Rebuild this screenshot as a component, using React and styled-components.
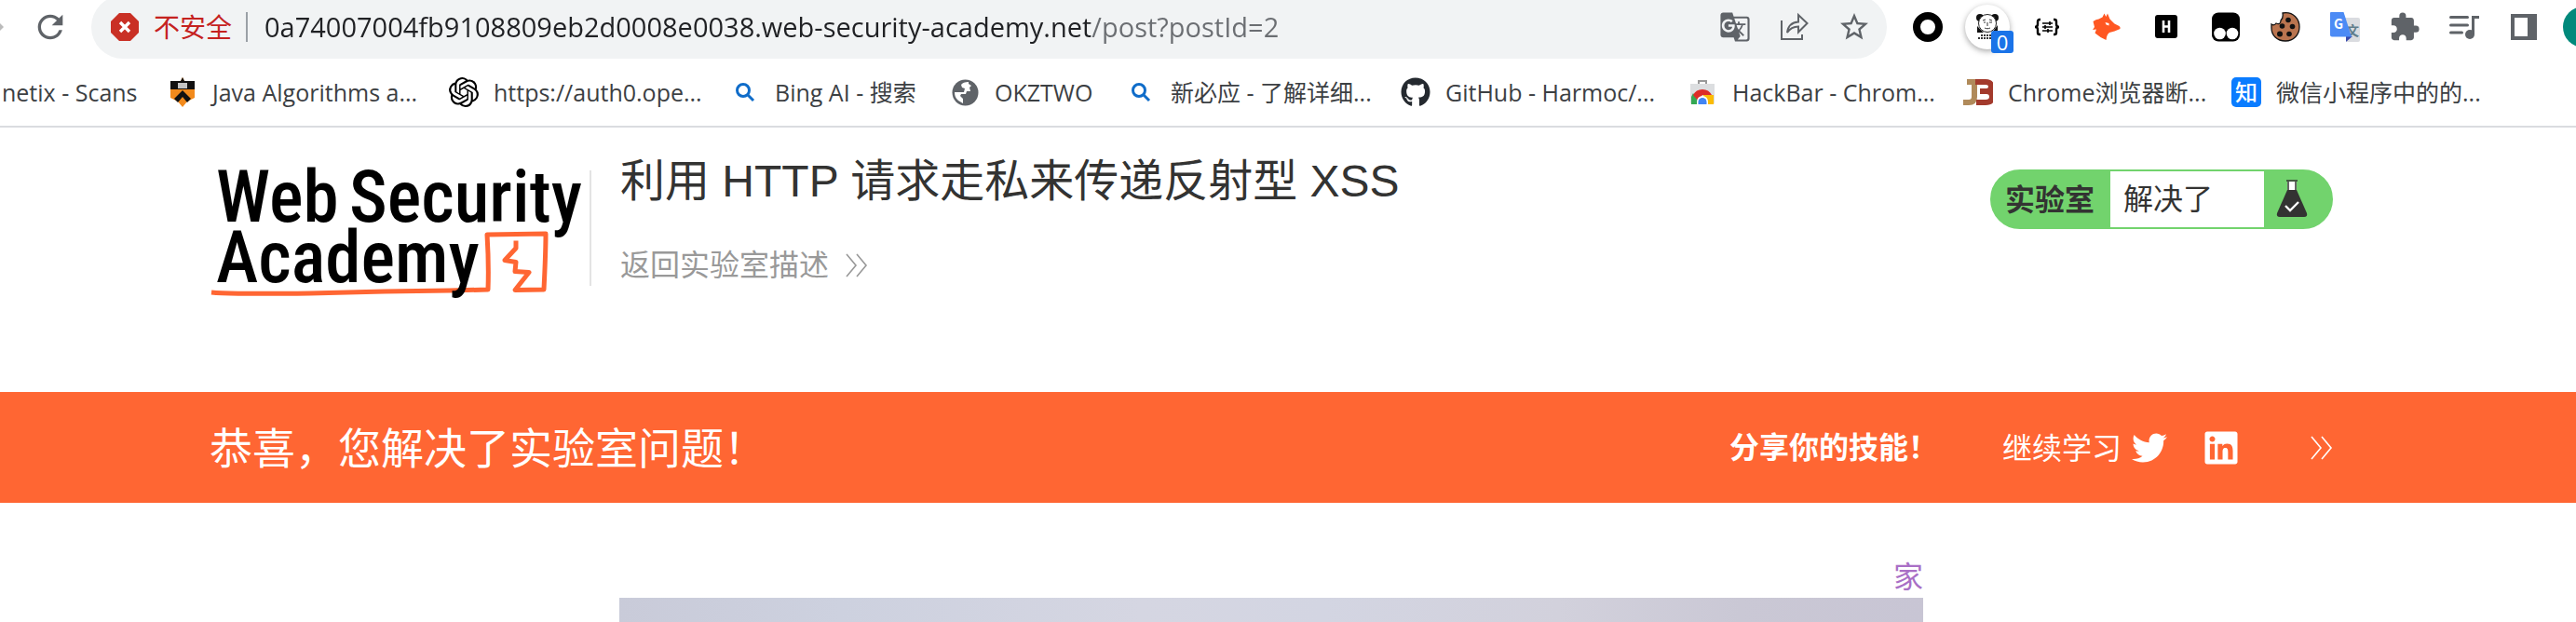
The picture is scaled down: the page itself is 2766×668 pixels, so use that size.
import React from "react";
import styled, { createGlobalStyle } from "styled-components";
import { MdRefresh, MdStarBorder, MdExtension, MdGTranslate } from "react-icons/md";
import { FaGithub, FaTwitter, FaLinkedin } from "react-icons/fa";
import { SiOpenai } from "react-icons/si";

const uiFont = `"Open Sans", "Noto Sans CJK SC", sans-serif`;
const pageFont = `"Liberation Sans", "Noto Sans CJK SC", sans-serif`;
const cjkFont = `"Noto Sans CJK SC", sans-serif`;

const GlobalStyle = createGlobalStyle`
  * { box-sizing: border-box; }
  body { margin: 0; background: #fff; overflow-x: hidden; }
  a { color: inherit; text-decoration: none; }
  button { border: 0; padding: 0; background: none; color: inherit; font: inherit; }
  svg { display: block; flex: none; }
`;

/* ---------- browser chrome ---------- */

const Toolbar = styled.div`
  display: flex;
  align-items: flex-end;
  height: 63px;
  overflow: hidden;
  font-family: ${uiFont};
  color: #5f6368;
`;

const NavButtons = styled.div`
  display: flex;
  align-items: center;
  gap: 33px;
  width: 98px;
  height: 68px;
`;

const IconButton = styled.button`
  display: flex;
  align-items: center;
  justify-content: center;
  flex: none;
  width: ${(p) => p.$width || 64}px;
  height: 68px;
`;

const AddressBar = styled.div`
  display: flex;
  align-items: center;
  flex: 1;
  min-width: 0;
  height: 68px;
  padding: 0 3px 0 21px;
  border-radius: 34px;
  background: #f1f3f4;
`;

const Insecure = styled.button`
  display: flex;
  align-items: center;
  gap: 16px;
  flex: none;
  margin-right: 15px;
  color: #c5221f;
  font-size: 28px;
  line-height: 40px;
`;

const Divider = styled.span`
  flex: none;
  width: 2px;
  height: 32px;
  margin-right: 18px;
  background: #9aa0a6;
`;

const Url = styled.input`
  flex: 1;
  min-width: 0;
  height: 48px;
  padding: 0;
  border: 0;
  outline: 0;
  color: #202124;
  font-family: ${uiFont};
  font-size: 29px;
  line-height: 48px;
  background: linear-gradient(90deg, #202124 0 887px, #6b6e72 887px);
  background-clip: text;
  -webkit-text-fill-color: transparent;
`;

const Extensions = styled.div`
  display: flex;
  flex: none;
  margin-left: 12px;
`;

const ActiveExtension = styled.span`
  position: relative;
  display: flex;
  align-items: center;
  justify-content: center;
  width: 48px;
  height: 48px;
  border-radius: 50%;
  background: #fff;
  box-shadow: 0 2px 6px rgba(0, 0, 0, 0.35);
`;

const Count = styled.span`
  position: absolute;
  right: -4px;
  bottom: -4px;
  width: 24px;
  height: 24px;
  border-radius: 3px;
  background: #1a73e8;
  color: #fff;
  font-size: 22px;
  line-height: 24px;
  text-align: center;
`;

const AvatarSlot = styled.div`
  display: flex;
  align-items: center;
  flex: none;
  width: 24px;
  height: 68px;
  padding-left: 10px;
`;

const Avatar = styled.button`
  flex: none;
  width: 44px;
  height: 44px;
  border-radius: 50%;
  background: #00897b;
`;

const Bookmarks = styled.nav`
  display: flex;
  height: 74px;
  padding-left: 2px;
  border-bottom: 2px solid #dadce0;
  font-family: ${uiFont};
  font-size: 25px;
  line-height: 72px;
  color: #3c4043;
`;

const Bookmark = styled.a`
  display: flex;
  align-items: center;
  gap: 16px;
  flex: none;
  width: ${(p) => p.$width}px;
  white-space: nowrap;
`;

const Favicon = styled.span`
  display: flex;
  align-items: center;
  justify-content: center;
  flex: none;
  width: 32px;
  height: 32px;
`;

/* ---------- lab page ---------- */

const LabHeader = styled.header`
  display: flex;
  align-items: flex-start;
  height: 284px;
  padding: 16px 261px 0 225px;
  font-family: ${pageFont};
  color: #333332;
`;

const LogoLink = styled.a`
  flex: none;
`;

const TitleBlock = styled.div`
  display: flex;
  flex: 1;
  min-width: 0;
  margin: 14px 0 0 8px;
`;

const Rule = styled.span`
  flex: none;
  width: 2px;
  height: 124px;
  margin: 16px 31px 0 0;
  background: #e3e3e3;
`;

const TitleText = styled.div`
  display: flex;
  flex-direction: column;
  gap: 34px;
`;

const Title = styled.h1`
  margin: 0;
  font-size: 48px;
  font-weight: 400;
  line-height: 56px;
  white-space: nowrap;
`;

const BackLink = styled.a`
  display: flex;
  align-items: center;
  gap: 18px;
  color: #999;
  font-size: 32px;
  line-height: 56px;
`;

const LabStatus = styled.div`
  display: flex;
  flex: none;
  height: 64px;
  margin-top: 29px;
  border: 2px solid #72d36d;
  border-radius: 32px;
  overflow: hidden;
  background: #72d36d;
  font-size: 32px;
  line-height: 60px;
`;

const StatusLabel = styled.strong`
  width: 127px;
  padding-left: 14px;
  line-height: 62px;
`;

const StatusValue = styled.span`
  width: 165px;
  padding-left: 14px;
  background: #fff;
`;

const StatusIcon = styled.span`
  width: 72px;
  padding: 8px 0 0 12px;
`;

const Banner = styled.section`
  display: flex;
  align-items: center;
  height: 119px;
  padding: 0 261px 0 225px;
  background: #ff6633;
  color: #fff;
  font-family: ${cjkFont};
  font-size: 32px;
  line-height: 48px;
`;

const Congrats = styled.h2`
  flex: 1;
  margin: 0;
  padding-bottom: 6px;
  font-size: 46px;
  font-weight: 400;
  line-height: 68px;
`;

const Share = styled.strong`
  width: 293px;
  padding-bottom: 6px;
  font-weight: 700;
`;

const Learn = styled.a`
  margin-right: 11px;
  padding-bottom: 4px;
`;

const Social = styled.a`
  margin-right: ${(p) => p.$gap}px;
`;

const Content = styled.main`
  padding: 54px 261px 0 225px;
  font-family: ${cjkFont};
  font-size: 32px;
  line-height: 46px;
`;

const Column = styled.div`
  display: flex;
  flex-direction: column;
  gap: 2px;
  max-width: 1400px;
  margin: 0 auto;
`;

const HomeLink = styled.a`
  align-self: flex-end;
  color: #a96fc6;
`;

const Hero = styled.div`
  height: 26px;
  background: linear-gradient(90deg, #c9cbd9 0%, #cdd1df 17%, #d5d6e2 40%, #d3d5e2 54%, #d2d1dc 72%, #cac8d5 86%, #c8c5d4 100%);
`;

const IconText = styled.text`
  font-family: ${cjkFont};
  font-size: ${(p) => p.$size}px;
  font-weight: ${(p) => p.$weight};
`;

const LogoText = styled.text`
  font-family: "Roboto Condensed", Roboto, sans-serif;
  font-size: 77px;
  font-weight: 500;
`;

const Octagon = () => (
  <svg width="30" height="32" viewBox="0 0 30 32">
    <path d="M9 1h12l9 9v12l-9 9H9l-9-9V10z" fill="#c93025" />
    <path d="M10 11l10 10M20 11L10 21" stroke="#fff" strokeWidth="3.4" />
  </svg>
);

const ShareIcon = () => (
  <svg width="32" height="32" viewBox="0 0 32 32" fill="none" stroke="#5f6368" strokeWidth="2">
    <path d="M2 9v20h22v-5" />
    <path d="M8 22C9 14 13 11 20 10.500V3l9.500 9-9.500 9.500v-6c-5 0-9 2-12 6.500z" />
  </svg>
);

const Panda = () => (
  <svg width="28" height="32" viewBox="0 0 28 32">
    <circle cx="6" cy="6" r="4" fill="#111" />
    <circle cx="22" cy="6" r="4" fill="#111" />
    <path d="M3 22V15l7 7z M25 22v-8l-6 8z" fill="#111" />
    <ellipse cx="14" cy="12" rx="9.500" ry="9.500" fill="#fff" stroke="#222" />
    <path d="M9 9l3-1M16 8l3 1M10 11h2M16 11h3M14 11v4M11 17c2 1 4 1 6 0" stroke="#333" fill="none" />
    <path d="M7 25h13M4 28h18" stroke="#333" strokeWidth="2" strokeDasharray="2 1" />
  </svg>
);

const Braces = () => (
  <svg width="28" height="20" viewBox="0 0 28 20" fill="none" stroke="#000">
    <path d="M7 2H6Q4 2 4 4v3q0 3-3 3q3 0 3 3v3q0 2 2 2h1M21 2h1q2 0 2 2v3q0 3 3 3q-3 0-3 3v3q0 2-2 2h-1" strokeWidth="2.400" />
    <path d="M9 6h11M9 10h11M9 14h11M17 4v4M12 8v4M15 12v4" strokeWidth="1.600" />
  </svg>
);

const Fox = () => (
  <svg width="32" height="32" viewBox="0 0 32 32">
    <path d="M11.500 5.500L13.500 1.500l1.800 3.500L17 1.500l2.500 6 5 5 5 2.500q1.500 1 1 3l-6 2.500-5.500 1.500q-3 2-3.500 8l-6-3-6-4.500L5 18.500l-4 .500 2-3L1.500 10q3-2.500 6-2.500z" fill="#ff5722" />
    <path d="M14.500 11l4 1v2.500l-3-1z" fill="#fff" />
  </svg>
);

const HSquare = () => (
  <svg width="24" height="26" viewBox="0 0 24 26">
    <rect width="24" height="25" rx="3" fill="#000" />
    <path d="M9 6v13M15 6v13M9 12.500h6" stroke="#fff" strokeWidth="2.600" />
  </svg>
);

const Tamper = () => (
  <svg width="30" height="32" viewBox="0 0 30 32">
    <rect width="30" height="31" y="0.500" rx="7" fill="#000" />
    <circle cx="8.500" cy="23" r="6.300" fill="#fff" />
    <circle cx="22" cy="23" r="6.300" fill="#fff" />
  </svg>
);

const Cookie = () => (
  <svg width="32" height="32" viewBox="0 0 32 32">
    <path d="M13 1C25-1 31 8 31 16s-6 15-15 15S1 25 1 17v-4q3 2 5-1q5 2 5-3q3-3 2-8z" fill="#b9744f" stroke="#111" strokeWidth="1.300" />
    <g fill="#111">
      <circle cx="19" cy="8.500" r="2.800" />
      <circle cx="12.500" cy="15" r="2.800" />
      <circle cx="23.500" cy="15.500" r="2.800" />
      <circle cx="10" cy="23.500" r="3" />
      <circle cx="20" cy="23.500" r="2.800" />
    </g>
  </svg>
);

const Translate = () => (
  <svg width="32" height="32" viewBox="0 0 32 32">
    <path d="M14 6h16q2 0 2 2v22q0 2-2 2H18z" fill="#dadce0" />
    <IconText $size={14} $weight={700} x="17" y="25" fill="#607d8b">文</IconText>
    <path d="M17 26h7l-7 6z" fill="#3949ab" />
    <path d="M1 0h13.500L23 26.500H2q-2 0-2-2V1q0-1 1-1z" fill="#4c8bf5" />
    <IconText $size={14} $weight={700} x="4" y="18" fill="#fff">G</IconText>
  </svg>
);

const Playlist = () => (
  <svg width="32" height="32" viewBox="0 0 32 32" fill="none" stroke="#5f6368" strokeWidth="3">
    <path d="M1.500 5.500h18M1.500 14h18M1.500 22h12" strokeLinecap="round" />
    <path d="M25.500 24V5.500H32" />
    <circle cx="22" cy="24" r="5" fill="#5f6368" stroke="none" />
  </svg>
);

const SidePanel = () => (
  <svg width="28" height="28" viewBox="0 0 28 28">
    <path fillRule="evenodd" d="M0 0h28v28H0zM4 4v20h14V4z" fill="#5f6368" />
  </svg>
);

const Shield = () => (
  <svg width="26" height="32" viewBox="0 0 26 32">
    <path d="M0 4h11l2-4 2 4h11v18l-8 4-5 6-5-6-8-4z" fill="#f28a1c" />
    <path d="M0 4h11l2-4 2 4h11v9H0z" fill="#111" />
    <rect x="8" y="6" width="10" height="6" fill="#c4c4c4" />
    <path d="M13 14l9 9-4 4-5-6-5 6-4-4z" fill="#111" />
  </svg>
);

const Search = () => (
  <svg width="22" height="22" viewBox="0 0 22 22" fill="none" stroke="#0f6cc9" strokeWidth="3">
    <circle cx="9" cy="9" r="6.500" />
    <path d="M13.500 13.500L20 20" />
  </svg>
);

const Globe = () => (
  <svg width="29" height="29" viewBox="0 0 29 29">
    <circle cx="14.500" cy="14.500" r="14" fill="#5f6368" />
    <path d="M18 3q-6 0-8 3l1 3 3 1-1 4H3q0 6 4 9l5 3v-5l-3-3 1-2h5l1-3h4l-1-4 2-2-3-2z" fill="#fff" />
    <path d="M18 14l7 1q1 4-3 8l-4 1q2-4 0-6z" fill="#5f6368" />
  </svg>
);

const Store = () => (
  <svg width="26" height="26" viewBox="0 0 26 26">
    <path d="M9 4V1h8v3" fill="none" stroke="#999" strokeWidth="2" />
    <path d="M0 4h26v20q0 2-2 2H2q-2 0-2-2z" fill="#dcdee0" />
    <path d="M1 26v-8l2-4 8 12z" fill="#34a853" />
    <path d="M25 26V16H14v10z" fill="#fbbc05" />
    <path d="M3 16q3-6 10-6t10 6H13l-5 6z" fill="#dd2c27" />
    <path d="M7 26v-3a6 6 0 0 1 12 0v3z" fill="#fff" />
    <path d="M8.500 26v-2.500a4.500 4.500 0 0 1 9 0V26z" fill="#4285f4" />
  </svg>
);

const Jb = () => (
  <svg width="32" height="30" viewBox="0 0 32 30" fill="none">
    <path d="M4 4h8v16q0 6-6 6H0" stroke="#b08a5a" strokeWidth="6" />
    <path d="M13 4h11q6 0 6 5t-5 5h-7 7q6 0 6 6t-7 6H14" stroke="#a33a2c" strokeWidth="6" />
  </svg>
);

const Zhihu = () => (
  <svg width="32" height="32" viewBox="0 0 32 32">
    <rect width="32" height="32" rx="5" fill="#0a7cff" />
    <IconText $size={24} $weight={500} x="4" y="25" fill="#fff">知</IconText>
  </svg>
);

const Chevrons = () => (
  <svg width="24" height="26" viewBox="0 0 24 26" fill="none" stroke="currentColor" strokeWidth="1.600">
    <path d="M1 1l10 12L1 25M12 1l10 12-10 12" />
  </svg>
);

const Logo = () => (
  <svg width="400" height="172" viewBox="0 -20 400 172">
    <g fill="none" stroke="#ff6633" strokeWidth="5" strokeLinejoin="round">
      <path d="M2 141q20 2 106 1l80-2 70-1 41-1q1-28-1-59l63-1q0 20-2 60l-31 0.500 15-19-15-1 1-10-12-2 12-13v-8" />
    </g>
    <LogoText x="7" y="65">Web</LogoText>
    <LogoText x="150" y="65">Security</LogoText>
    <LogoText x="7" y="130">Academy</LogoText>
  </svg>
);

const Flask = () => (
  <svg width="36" height="42" viewBox="0 0 36 42">
    <path d="M13 3h10v10H13z" fill="#fff" />
    <path d="M12 2h12M14 3v9M22 3v9" stroke="#333332" strokeWidth="1.500" />
    <path d="M13 12h10l11 25q1 4-3 4H5q-4 0-3-4z" fill="#333332" />
    <path d="M11 29l5 5 9-9" fill="none" stroke="#fff" strokeWidth="2.400" />
  </svg>
);

const Ring = () => (
  <svg width="32" height="32" viewBox="0 0 32 32">
    <circle cx="16" cy="16" r="12" fill="none" stroke="#000" strokeWidth="8" />
  </svg>
);

const extensions = [
  ["圆环", <Ring key="i" />],
  ["熊猫", <ActiveExtension key="i"><Panda /><Count>0</Count></ActiveExtension>],
  ["JSON", <Braces key="i" />],
  ["代理", <Fox key="i" />],
  ["HackBar", <HSquare key="i" />],
  ["脚本", <Tamper key="i" />],
  ["Cookie", <Cookie key="i" />],
  ["翻译", <Translate key="i" />],
  ["扩展程序", <MdExtension key="i" size={34} />],
  ["媒体", <Playlist key="i" />],
  ["侧边栏", <SidePanel key="i" />],
];

const bookmarks = [
  ["netix - Scans", 178, null],
  ["Java Algorithms a...", 302, <Shield key="i" />],
  ["https://auth0.ope...", 302, <SiOpenai key="i" size={32} color="#000" />],
  ["Bing AI - 搜索", 236, <Search key="i" />],
  ["OKZTWO", 189, <Globe key="i" />],
  ["新必应 - 了解详细...", 295, <Search key="i" />],
  ["GitHub - Harmoc/...", 308, <FaGithub key="i" size={32} color="#24292f" />],
  ["HackBar - Chrom...", 296, <Store key="i" />],
  ["Chrome浏览器断...", 288, <Jb key="i" />],
  ["微信小程序中的的...", 280, <Zhihu key="i" />],
];

export default function App() {
  return (
    <>
      <GlobalStyle />
      <Toolbar>
        <NavButtons>
          <IconButton $width={3} aria-label="前进">
            <svg width="4" height="8" viewBox="0 0 4 8"><path d="M0 0l4 4-4 4z" fill="#bbb" /></svg>
          </IconButton>
          <IconButton $width={36} aria-label="重新加载"><MdRefresh size={40} /></IconButton>
        </NavButtons>
        <AddressBar>
          <Insecure><Octagon />不安全</Insecure>
          <Divider />
          <Url aria-label="地址" defaultValue="0a74007004fb9108809eb2d0008e0038.web-security-academy.net/post?postId=2" />
          <IconButton aria-label="翻译此页"><MdGTranslate size={34} /></IconButton>
          <IconButton aria-label="分享"><ShareIcon /></IconButton>
          <IconButton aria-label="收藏"><MdStarBorder size={36} /></IconButton>
        </AddressBar>
        <Extensions>
          {extensions.map(([name, icon]) => (
            <IconButton key={name} aria-label={name}>{icon}</IconButton>
          ))}
        </Extensions>
        <AvatarSlot><Avatar aria-label="个人资料" /></AvatarSlot>
      </Toolbar>

      <Bookmarks>
        {bookmarks.map(([label, width, icon]) => (
          <Bookmark key={label} href="#" $width={width}>
            {icon && <Favicon>{icon}</Favicon>}
            {label}
          </Bookmark>
        ))}
      </Bookmarks>

      <LabHeader>
        <LogoLink href="#" aria-label="Web Security Academy"><Logo /></LogoLink>
        <TitleBlock>
          <Rule />
          <TitleText>
            <Title>利用 HTTP 请求走私来传递反射型 XSS</Title>
            <BackLink href="#">返回实验室描述<Chevrons /></BackLink>
          </TitleText>
        </TitleBlock>
        <LabStatus>
          <StatusLabel>实验室</StatusLabel>
          <StatusValue>解决了</StatusValue>
          <StatusIcon><Flask /></StatusIcon>
        </LabStatus>
      </LabHeader>

      <Banner>
        <Congrats>恭喜，您解决了实验室问题！</Congrats>
        <Share>分享你的技能！</Share>
        <Learn href="#">继续学习</Learn>
        <Social href="#" aria-label="Twitter" $gap={38}><FaTwitter size={38} /></Social>
        <Social href="#" aria-label="LinkedIn" $gap={76}><FaLinkedin size={40} /></Social>
        <Chevrons />
      </Banner>

      <Content>
        <Column>
          <HomeLink href="#">家</HomeLink>
          <Hero />
        </Column>
      </Content>
    </>
  );
}
